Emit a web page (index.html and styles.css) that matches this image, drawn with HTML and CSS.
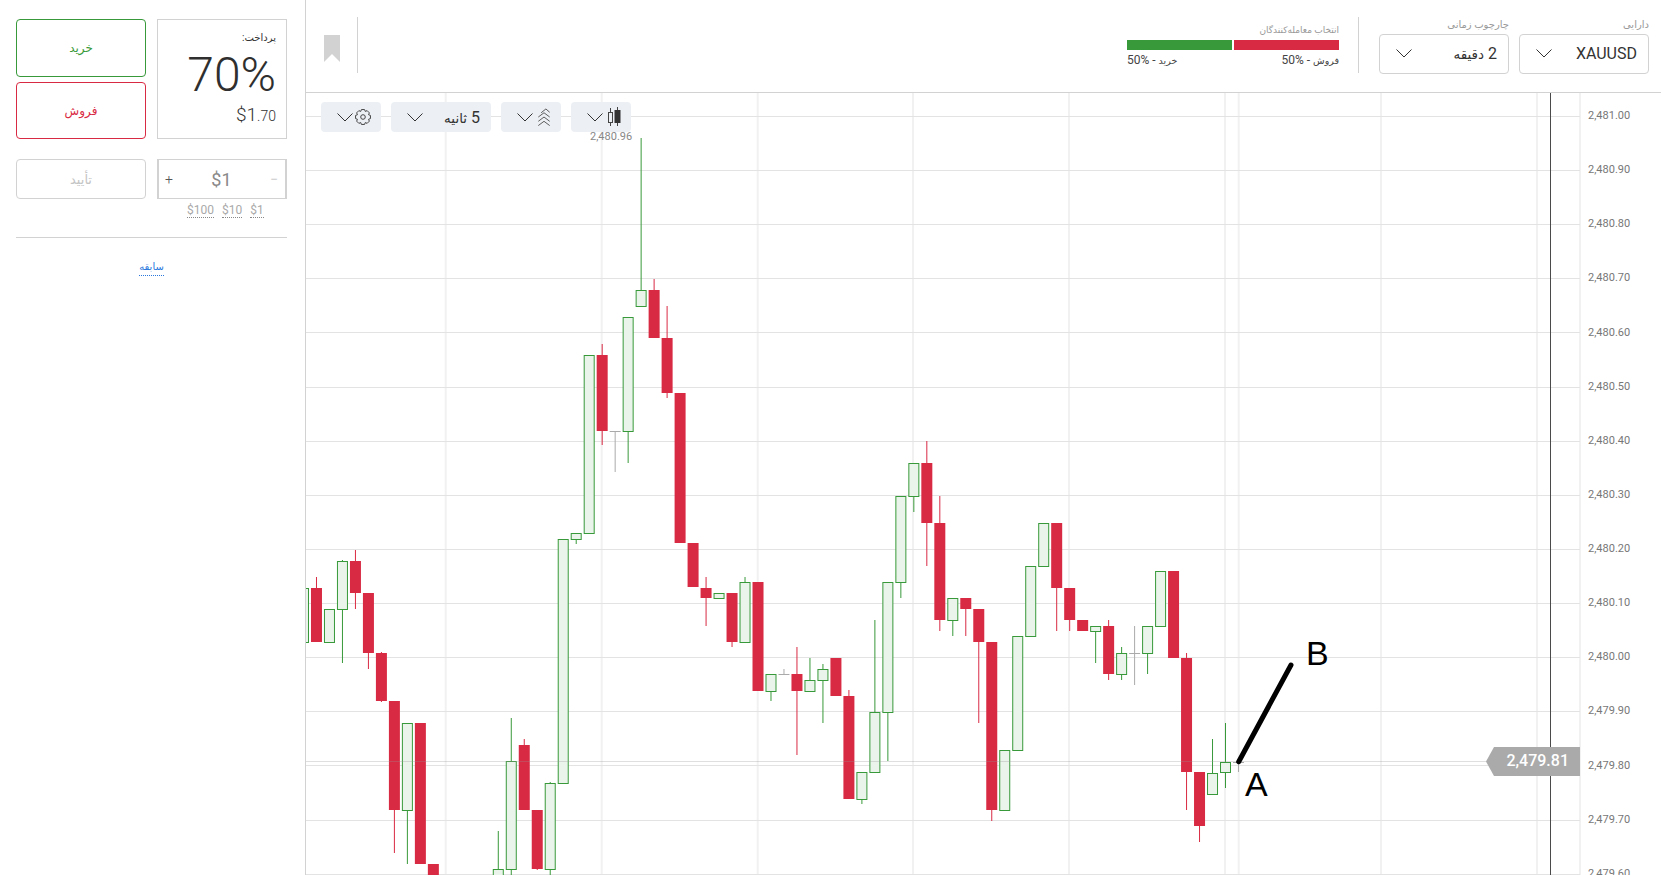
FILE: index.html
```
<!DOCTYPE html>
<html lang="fa">
<head>
<meta charset="utf-8">
<title>XAUUSD</title>
<link rel="stylesheet" href="styles.css">
</head>
<body>
<div class="app">
  <aside class="sidebar">
    <div class="trade-grid">
      <div class="actions">
        <button class="btn btn-buy" dir="rtl">خرید</button>
        <button class="btn btn-sell" dir="rtl">فروش</button>
      </div>
      <div class="payout">
        <div class="payout-label" dir="rtl">پرداخت:</div>
        <div class="payout-pct">70%</div>
        <div class="payout-amt">$1<small>.70</small></div>
      </div>
      <button class="btn btn-confirm" dir="rtl">تأیید</button>
      <div class="amount-col">
        <div class="amount">
          <span class="amount-plus">+</span>
          <span class="amount-val">$1</span>
          <span class="amount-minus">−</span>
        </div>
        <div class="presets">
          <span class="preset">$100</span>
          <span class="preset">$10</span>
          <span class="preset">$1</span>
        </div>
      </div>
    </div>
    <hr class="rule">
    <div class="history"><a class="history-link" dir="rtl">سابقه</a></div>
  </aside>

  <main class="main">
    <header class="topbar">
      <svg class="bookmark" viewBox="0 0 16 27"><path d="M0 0H16V27L8 19L0 27Z"/></svg>
      <span class="vline vline-left"></span>
      <div class="sentiment">
        <div class="sent-title" dir="rtl">انتخاب معامله‌کنندگان</div>
        <div class="sent-bars"><span class="bar bar-green"></span><span class="bar bar-red"></span></div>
        <div class="sent-values"><span>50% - <span class="fa-small">خرید</span></span><span>50% - <span class="fa-small">فروش</span></span></div>
      </div>
      <span class="vline vline-right"></span>
      <div class="field">
        <div class="field-label" dir="rtl">چارچوب زمانی</div>
        <div class="select">
          <svg class="chev" viewBox="0 0 16 9"><path d="M.5.5L8 8L15.500.5"/></svg>
          <span class="select-text" dir="rtl">2 <span class="fa-word">دقیقه</span></span>
        </div>
      </div>
      <div class="field">
        <div class="field-label" dir="rtl">دارایی</div>
        <div class="select">
          <svg class="chev" viewBox="0 0 16 9"><path d="M.5.5L8 8L15.500.5"/></svg>
          <span class="select-text">XAUUSD</span>
        </div>
      </div>
    </header>

    <section class="chart">
      <svg id="plot" class="plot" viewBox="306 93 1355 782"></svg>

      <div class="axis">
        <span>2,481.00</span><span>2,480.90</span><span>2,480.80</span><span>2,480.70</span><span>2,480.60</span>
        <span>2,480.50</span><span>2,480.40</span><span>2,480.30</span><span>2,480.20</span><span>2,480.10</span>
        <span>2,480.00</span><span>2,479.90</span><span>2,479.80</span><span>2,479.70</span><span>2,479.60</span>
      </div>

      <div class="toolbar">
        <div class="tool tool-s">
          <svg class="chev" viewBox="0 0 16 9"><path d="M.5.5L8 8L15.500.5"/></svg>
          <svg class="ico" viewBox="0 0 16 16"><path d="M15.43 6.420V9.580L13.54 10.300L14.37 12.140L12.140 14.370L10.300 13.540L9.580 15.430H6.420L5.700 13.540L3.860 14.370L1.630 12.140L2.460 10.300L.57 9.580V6.420L2.460 5.700L1.630 3.860L3.860 1.630L5.700 2.460L6.420 .57H9.580L10.300 2.460L12.140 1.630L14.370 3.860L13.540 5.700Z"/><circle cx="8" cy="8" r="2.300"/></svg>
        </div>
        <div class="tool tool-l">
          <svg class="chev" viewBox="0 0 16 9"><path d="M.5.5L8 8L15.500.5"/></svg>
          <span class="tool-text" dir="rtl">5 <span class="fa-word">ثانیه</span></span>
        </div>
        <div class="tool tool-s">
          <svg class="chev" viewBox="0 0 16 9"><path d="M.5.5L8 8L15.500.5"/></svg>
          <svg class="ico ico-zig" viewBox="0 0 14 20"><path d="M4 5L9 1L13 4.500M1 9.500L7 5L13 9.500M1 14L7 9.500L13 14M1 18.500L7 14L13 18.500"/></svg>
        </div>
        <div class="tool tool-s">
          <svg class="chev" viewBox="0 0 16 9"><path d="M.5.5L8 8L15.500.5"/></svg>
          <svg class="ico ico-candle" viewBox="0 0 14 20"><path d="M3.500 1V5M3.500 15.500V19M10.500 0V19"/><rect class="hollow" x="1.500" y="5.500" width="4" height="10"/><rect class="solid" x="8" y="3.500" width="5" height="12"/></svg>
        </div>
      </div>

      <span class="hi-label">2,480.96</span>
      <div class="price-tag">2,479.81</div>
      <span class="mark mark-a">A</span>
      <span class="mark mark-b">B</span>
    </section>
  </main>
</div>
<script src="chart.js"></script>
</body>
</html>
```
FILE: styles.css
```
* { box-sizing: border-box; }
html, body { margin: 0; height: 875px; overflow: hidden; background: #fff; }
body { font-family: Roboto, "DejaVu Sans", sans-serif; color: #333; }
.app { display: flex; width: 1661px; height: 875px; }

.sidebar { width: 306px; flex: none; padding: 19px 18px 0 16px; border-right: 1px solid #d2d2d2; }
.trade-grid { display: grid; grid-template-columns: 130px 130px; column-gap: 11px; row-gap: 20px; }
.actions { display: flex; flex-direction: column; gap: 5px; height: 120px; }
.btn { display: block; width: 100%; padding: 0; background: #fff; border-radius: 4px; font: 12px Roboto, "DejaVu Sans", sans-serif; text-align: center; }
.btn-buy { height: 58px; border: 1px solid #38993a; color: #38993a; }
.btn-sell { height: 57px; border: 1px solid #d92a43; color: #d92a43; }
.btn-confirm { height: 40px; border: 1px solid #d2d2d2; color: #c4c4c4; font-size: 13px; }

.payout { height: 120px; border: 1px solid #d2d2d2; padding: 11px 10px 0 0; text-align: right; }
.payout-label { font-size: 10px; line-height: 14px; color: #333; }
.payout-pct { font-size: 48px; font-weight: 300; line-height: 52px; margin-top: 4px; color: #2f2f2f; }
.payout-amt { font-size: 19px; font-weight: 300; line-height: 20px; margin-top: 4px; }
.payout-amt small { font-size: 14px; }

.amount-col { display: flex; flex-direction: column; }
.amount { height: 40px; display: flex; align-items: center; justify-content: space-between; padding: 0 7px 0 6px; border: 1px solid #d2d2d2; border-left-width: 2px; border-right-width: 2px; }
.amount-plus { font-size: 14px; font-weight: 300; color: #555; }
.amount-val { font-size: 18px; color: #8a8a8a; }
.amount-minus { font-size: 14px; color: #ccc; }
.presets { display: flex; gap: 8px; padding: 5px 0 0 30px; }
.preset { font-size: 12px; line-height: 13px; height: 14px; color: #a9a9a9; border-bottom: 1px dotted #888; }

.rule { margin: 19px 0 0; border: 0; border-top: 1px solid #d2d2d2; width: 271px; }
.history { width: 271px; padding-top: 20px; text-align: center; line-height: 0; }
.history-link { display: inline-block; font-size: 10px; line-height: 17px; color: #2b78dc; border-bottom: 1px dotted #2b78dc; }

.main { flex: 1; display: flex; flex-direction: column; min-width: 0; }
.topbar { height: 93px; flex: none; display: flex; align-items: flex-start; padding-right: 12px; border-bottom: 1px solid #d2d2d2; }
.bookmark { width: 16px; height: 27px; margin: 35px 0 0 18px; fill: #d2d2d2; }
.vline { width: 1px; height: 56px; margin-top: 17px; background: #d2d2d2; flex: none; }
.vline-left { margin-left: 17px; margin-right: auto; }
.vline-right { margin-left: 19px; margin-right: 10px; }

.sentiment { width: 212px; padding-top: 23px; }
.sent-title { font-size: 9px; line-height: 14px; color: #999; text-align: right; }
.sent-bars { display: flex; gap: 2px; margin-top: 3px; height: 10px; }
.bar { flex: 1; }
.bar-green { background: #38993a; }
.bar-red { background: #d92a43; }
.sent-values { display: flex; justify-content: space-between; margin-top: 3px; font-size: 12px; line-height: 14px; color: #444; }
.fa-small { font-size: 9.500px; }
.fa-word { font-size: 13.500px; }

.field { width: 130px; padding-top: 16px; margin-left: 10px; }
.field-label { font-size: 10px; line-height: 18px; color: #999; text-align: right; }
.select { height: 40px; display: flex; align-items: center; justify-content: space-between; padding: 0 11px 2px 16px; border: 1px solid #d2d2d2; border-radius: 4px; }
.select-text { font-size: 16px; color: #333; }
.chev { width: 16px; height: 9px; flex: none; fill: none; stroke: #333; stroke-width: 1; }

.chart { flex: 1; position: relative; overflow: hidden; }
.plot { position: absolute; inset: 0; width: 100%; height: 100%; display: block; }
.axis { position: absolute; left: 1282px; top: -4px; display: flex; flex-direction: column; }
.axis span { height: 54.140px; line-height: 54px; font-size: 11px; color: #777; }

.toolbar { position: absolute; left: 15px; top: 9px; display: flex; gap: 10px; }
.tool { height: 30px; display: flex; align-items: center; justify-content: space-between; background: #eceff4; border-radius: 4px; }
.tool-s { width: 60px; padding: 0 10px 0 16px; gap: 2px; }
.tool-l { width: 100px; padding: 0 11px 0 16px; }
.tool-text { font-size: 16px; color: #333; }
.ico { width: 16px; height: 16px; flex: none; fill: none; stroke: #444; stroke-width: 1; }
.ico-zig { width: 14px; height: 19px; stroke: #555; }
.ico-candle { width: 14px; height: 20px; }
.ico-candle .solid { fill: #333; stroke: #333; }
.ico-candle .hollow { fill: #eceff4; }

.hi-label { position: absolute; left: 284px; top: 37px; font-size: 11px; line-height: 13px; color: #888; }
.price-tag { position: absolute; left: 1180px; top: 654px; width: 94px; height: 29px; padding-right: 11px; text-align: right; background: #aaa; color: #fff; font-size: 16px; font-weight: 500; line-height: 28px; clip-path: polygon(8px 0, 100% 0, 100% 100%, 8px 100%, 0 50%); }
.mark { position: absolute; font-family: "Liberation Sans", sans-serif; font-size: 34px; line-height: 38px; color: #000; }
.mark-a { left: 939px; top: 672px; }
.mark-b { left: 1000px; top: 541px; }
```
FILE: chart.js
```
// [top of upper wick, body top, body bottom, bottom of lower wick, type]; null = no wick
var G = 'g', R = 'r', D = 'd';
var candles = [
  [null, 588, 642, null, G], [577, 588, 642, null, R], [null, 609, 642, null, G], [560, 561, 609, 663, G],
  [550, 561, 593, 609, R], [null, 593, 653, 669, R], [652, 653, 701, 702, R], [null, 701, 810, 853, R],
  [null, 723, 810, 864, G], [null, 723, 864, null, R], [null, 864, 900, null, R], null, null, null, null,
  [831, 869, 900, null, G], [718, 761, 869, 900, G], [739, 745, 810, null, R], [null, 810, 869, 870, R],
  [782, 783, 869, 900, G], [null, 539, 783, null, G], [null, 533, 539, 544, G], [null, 355, 533, null, G],
  [344, 355, 431, 445, R], [431, 431, 431, 472, D], [null, 317, 431, 463, G], [138, 290, 306, null, G],
  [279, 290, 338, null, R], [306, 338, 393, 398, R], [null, 393, 543, null, R], [null, 543, 587, null, R],
  [577, 588, 598, 626, R], [null, 593, 598, null, G], [null, 593, 642, 647, R], [577, 582, 642, null, G],
  [null, 582, 691, null, R], [null, 674, 691, 701, G], [669, 674, 674, 674, D], [647, 674, 691, 755, R],
  [658, 680, 691, null, G], [664, 669, 680, 723, G], [null, 658, 696, null, R], [690, 696, 799, null, R],
  [null, 772, 799, 804, G], [620, 712, 772, null, G], [null, 582, 712, 761, G], [null, 496, 582, 598, G],
  [null, 463, 496, 512, G], [441, 463, 523, 566, R], [496, 523, 620, 631, R], [null, 598, 620, 636, G],
  [null, 598, 609, 636, R], [null, 609, 642, 723, R], [null, 642, 810, 821, R], [null, 750, 810, null, G],
  [null, 636, 750, null, G], [null, 566, 636, null, G], [null, 523, 566, null, G], [null, 523, 588, 631, R],
  [null, 588, 620, 631, R], [null, 620, 631, null, R], [null, 626, 631, 663, G], [620, 626, 674, 680, R],
  [647, 653, 674, 680, G], [626, 653, 653, 685, D], [null, 626, 653, 674, G], [null, 571, 626, null, G],
  [null, 571, 658, null, R], [653, 658, 772, 810, R], [null, 772, 826, 842, R], [739, 773, 794, null, G],
  [723, 762, 772, 788, G], [762, 762, 762, 772, D]
];
var GREEN = '#38993a', RED = '#d92a43', GREY = '#aaaaaa', NS = 'http://www.w3.org/2000/svg';
var plot = document.getElementById('plot');

function add(tag, attrs) {
  var el = document.createElementNS(NS, tag);
  for (var k in attrs) el.setAttribute(k, attrs[k]);
  plot.appendChild(el);
  return el;
}
function line(x1, y1, x2, y2, color, width, extra) {
  var a = { x1: x1, y1: y1, x2: x2, y2: y2, stroke: color, 'stroke-width': width };
  for (var k in extra) a[k] = extra[k];
  return add('line', a);
}

[445.7, 601.7, 757.7, 913, 1069, 1225, 1238.7, 1381, 1537, 1580].forEach(function (x) {
  line(x, 93, x, 875, '#f1f1f1', 2);
});
for (var i = 0; i < 15; i++) {
  var y = Math.floor(116.3 + 54.14 * i) + 0.5;
  line(306, y, 1580, y, '#e3e3e3', 1);
}
line(1550.5, 93, 1550.5, 875, '#4a4a4a', 1);

candles.forEach(function (c, i) {
  if (!c) return;
  var x = 303.5 + 12.986 * i;
  var color = c[4] === G ? GREEN : c[4] === R ? RED : GREY;
  if (c[0] !== null) line(x, c[0], x, c[1], color, 1);
  if (c[3] !== null) line(x, c[2], x, c[3], color, 1);
  if (c[4] === G) {
    add('rect', { x: x - 5, y: c[1] + 0.5, width: 10, height: c[2] - c[1], fill: '#eaf4ea', stroke: GREEN, 'stroke-width': 1 });
  } else if (c[4] === R) {
    add('rect', { x: x - 5.5, y: c[1], width: 11, height: c[2] - c[1], fill: RED });
  } else {
    line(x - 5.5, c[1] + 0.5, x + 5.5, c[1] + 0.5, GREY, 1);
  }
});

line(306, 761.5, 1490, 761.5, 'rgba(150,150,150,.3)', 1);
line(1238.7, 761.7, 1291, 665, '#000', 5, { 'stroke-linecap': 'round' });
```
